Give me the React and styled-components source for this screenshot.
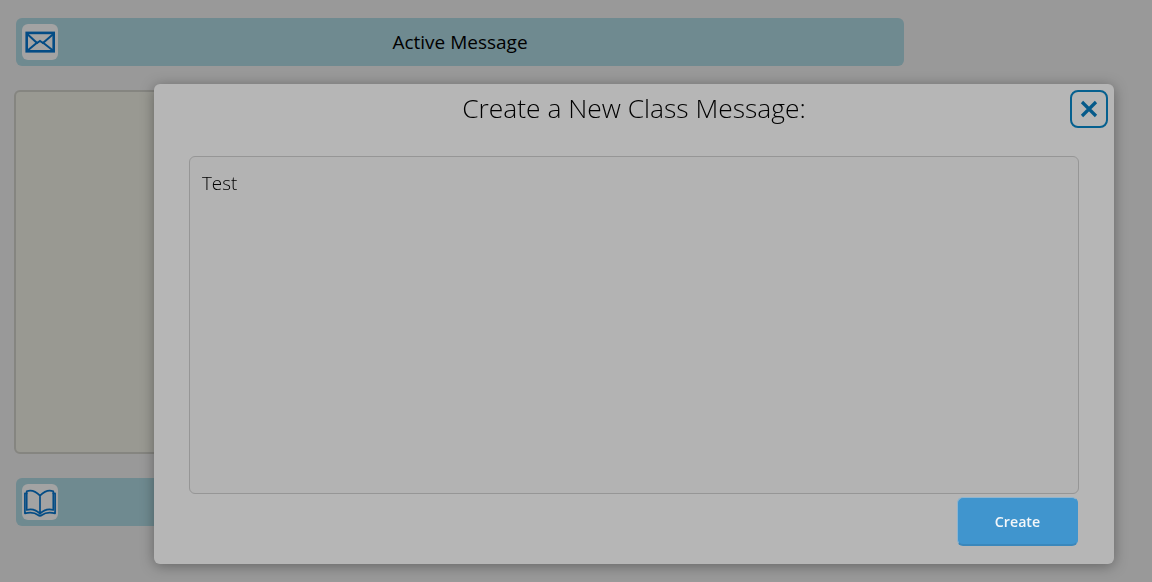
import React from "react";
import styled, { createGlobalStyle } from "styled-components";

const Global = createGlobalStyle`
  html, body { margin: 0; padding: 0; height: 100%; background: #999999; overflow: hidden; }
  body { font-family: "Open Sans", "Liberation Sans", sans-serif; }
  * { box-sizing: border-box; }
`;

const Page = styled.div`
  width: 1152px;
  height: 582px;
  padding: 18px 0 0 14px;
  display: flex;
  flex-direction: column;
  align-items: flex-start;
  background: #999999;
`;

const Bar = styled.div`
  width: 888px;
  height: 48px;
  margin-left: 2px;
  margin-bottom: ${(p) => p.$gap || 0}px;
  padding: 6px;
  display: flex;
  align-items: center;
  border-radius: 6px;
  background: #6f8a90;
`;

const IconTile = styled.div`
  width: 36px;
  height: 36px;
  flex: none;
  border-radius: 6px;
  background: #a3a3a3;
  display: flex;
  align-items: center;
  justify-content: center;
`;

const BarTitle = styled.div`
  flex: 1;
  margin-right: 36px;
  text-align: center;
  font-size: 19px;
  line-height: 24px;
  color: #000;
`;

const Panel = styled.div`
  width: 892px;
  height: 364px;
  margin-bottom: 24px;
  border: 2px solid #858580;
  border-radius: 6px;
  background: #999992;
`;

const Modal = styled.div`
  position: fixed;
  left: 154px;
  top: 84px;
  width: 960px;
  height: 480px;
  padding: 0 35px;
  display: flex;
  flex-direction: column;
  border-radius: 6px;
  background: #b6b6b6;
  box-shadow: 0 2px 14px rgba(0, 0, 0, 0.35);
`;

const ModalTitle = styled.h2`
  margin: 0;
  height: 72px;
  padding-top: 6px;
  text-align: center;
  font-size: 26.4px;
  line-height: 37px;
  font-weight: 300;
  color: #000;
`;

const CloseButton = styled.button`
  position: absolute;
  top: 6px;
  right: 6px;
  width: 38px;
  height: 38px;
  padding: 0;
  display: flex;
  align-items: center;
  justify-content: center;
  border: 2px solid #05608f;
  border-radius: 8px;
  background: transparent;
`;

const MessageBox = styled.div`
  width: 890px;
  height: 338px;
  padding: 14px 12px;
  border: 1px solid #969696;
  border-radius: 6px;
  background: #b3b3b3;
  font-size: 18.8px;
  line-height: 24px;
  font-weight: 350;
  color: #000;
`;

const Footer = styled.div`
  display: flex;
  justify-content: flex-end;
  padding: 3px 1px 0 0;
`;

const CreateButton = styled.button`
  width: 121px;
  height: 49px;
  padding: 0;
  border: 1px solid #8fb5cf;
  border-right-color: #4095ce;
  border-bottom: 2px solid #3a87bb;
  border-radius: 6px;
  background: #4095ce;
  color: #f2f6f9;
  font-family: "Open Sans", "Liberation Sans", sans-serif;
  font-size: 14.2px;
  font-weight: 550;
`;

const MailIcon = () => (
  <svg width="32" height="26" viewBox="0 0 32 26" fill="none" stroke="#044c85" strokeWidth="2">
    <rect x="2.7" y="3.9" width="27" height="18.4" strokeWidth="2.6" />
    <path d="M3 4.7 L13 14 L16 12 L19 14 L29.6 4.7" />
    <path d="M3 22 L13.5 13.3 M29.6 22 L18.5 13.3" />
  </svg>
);

const BookIcon = () => (
  <svg width="34" height="30" viewBox="0 0 34 30" fill="none" stroke="#044c85" strokeLinejoin="round" strokeLinecap="round">
    <path d="M17 8.7 C13 4.5 8 2.6 3.7 4.2 V23 C8 21.6 13 23 17 26.5 C21 23 26 21.6 30.3 23 V4.2 C26 2.6 21 4.5 17 8.7 Z M17 8.7 V27" strokeWidth="1.7" />
    <path d="M3.7 6.3 H1.9 V26.3 C7 25.2 12 25.6 15 28 Q17 29.6 19 28 C22 25.6 27 25.2 32.1 26.3 V6.3 H30.3" strokeWidth="1.7" />
  </svg>
);

const CloseIcon = () => (
  <svg width="18" height="18" viewBox="0 0 18 18" fill="none" stroke="#055a8a" strokeWidth="3.2" strokeLinecap="butt">
    <path d="M2 2 L16 16 M16 2 L2 16" />
  </svg>
);

export default function App() {
  return (
    <Page>
      <Global />
      <Bar $gap={24}>
        <IconTile><MailIcon /></IconTile>
        <BarTitle>Active Message</BarTitle>
      </Bar>
      <Panel />
      <Bar>
        <IconTile><BookIcon /></IconTile>
      </Bar>
      <Modal>
        <ModalTitle>Create a New Class Message:</ModalTitle>
        <CloseButton aria-label="Close"><CloseIcon /></CloseButton>
        <MessageBox>Test</MessageBox>
        <Footer>
          <CreateButton>Create</CreateButton>
        </Footer>
      </Modal>
    </Page>
  );
}
